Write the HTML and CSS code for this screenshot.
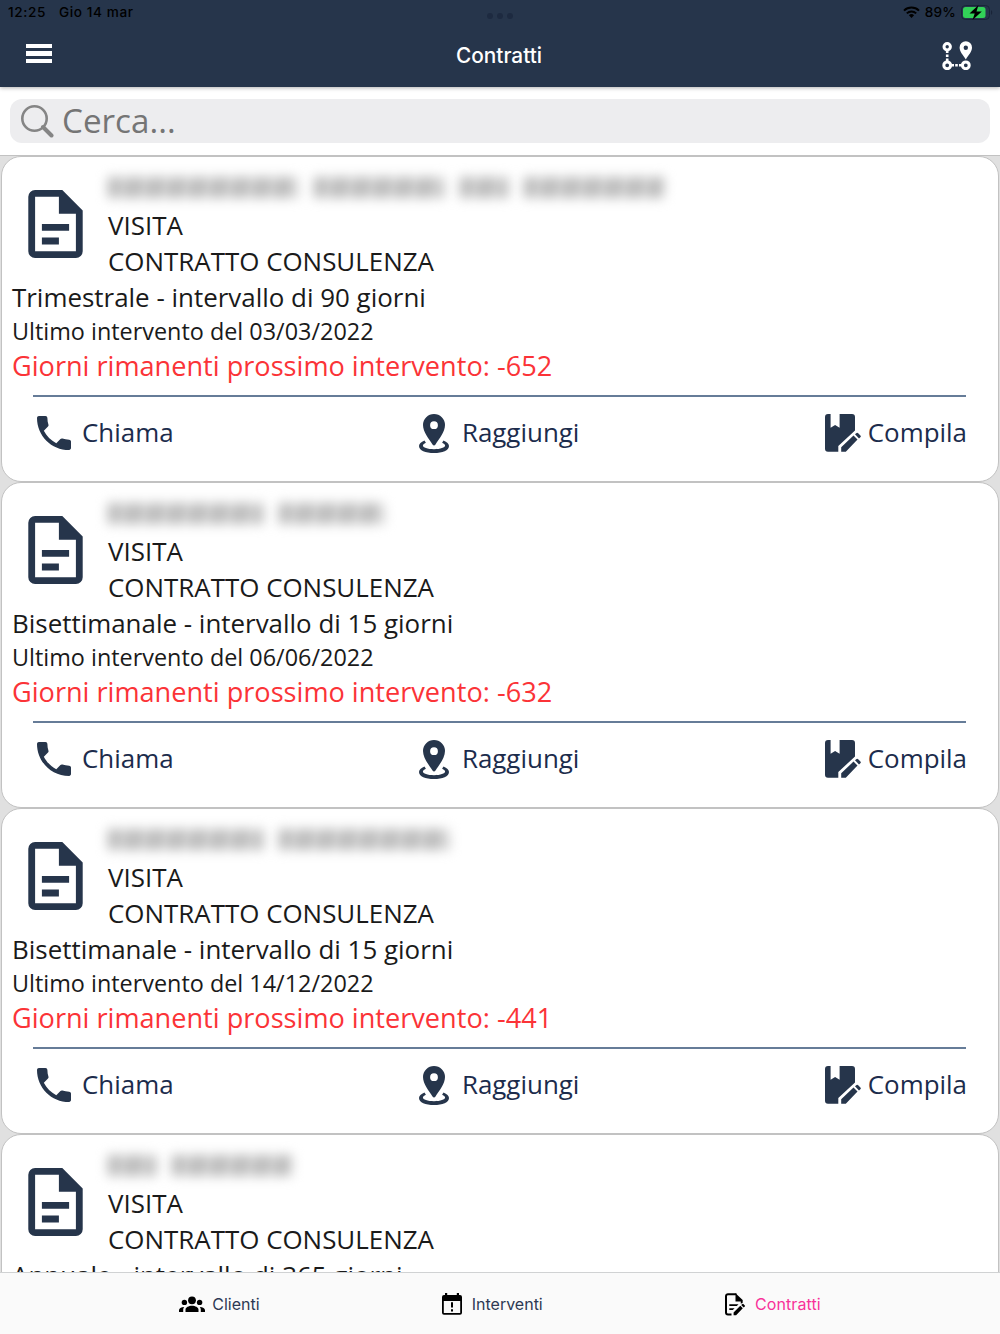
FILE: index.html
```
<!DOCTYPE html>
<html lang="it">
<head>
  <meta charset="UTF-8">
  <title>Contratti</title>
  <meta name="viewport" content="width=device-width, initial-scale=1.0">
  <link rel="stylesheet" href="styles.css">
</head>
<body>

<!-- Icone condivise -->
<svg class="sprite" aria-hidden="true">
  <symbol id="i-doc" viewBox="4 2 16 20">
    <path fill-rule="evenodd" d="M6 2h8l6 6v12a2 2 0 0 1-2 2H6a2 2 0 0 1-2-2V4a2 2 0 0 1 2-2zM6 4v16h12V9h-5V4zM8 12h8v2H8zM8 16h5v2H8z"/>
  </symbol>
  <symbol id="i-phone" viewBox="3 3 18 18">
    <path d="M6.62 10.79c1.44 2.83 3.76 5.14 6.59 6.59l2.2-2.200c.27-.27.67-.36 1.02-.24 1.12.37 2.33.57 3.57.57.55 0 1 .45 1 1V20c0 .55-.45 1-1 1-9.39 0-17-7.61-17-17 0-.55.45-1 1-1h3.500c.55 0 1 .45 1 1 0 1.250.2 2.450.57 3.570.11.35.03.74-.25 1.020l-2.200 2.200z"/>
  </symbol>
  <symbol id="i-pin" viewBox="0 0 30 39">
    <path fill-rule="evenodd" d="M15 0a11 11 0 0 1 11 11c0 7-6 14-9.500 19.500q-1.500 2-3 0C10 25 4 18 4 11A11 11 0 0 1 15 0zm0 7.300a3.900 3.900 0 1 0 0 7.800a3.900 3.900 0 1 0 0-7.800z"/>
    <path d="M5.500 26.500C2 28 0 29.800 0 32c0 4.400 6.500 7 15 7s15-2.600 15-7c0-2.200-2-4-5.500-5.500l-1.400 2.200c2 .9 3 1.900 3 2.800 0 2-4.600 3.700-11.100 3.700S3.900 33.500 3.900 31.500c0-.9 1-1.900 3-2.800z"/>
  </symbol>
  <symbol id="i-compile" viewBox="0 0 36 38">
    <path d="M3 0h2.600v13.800l4.500-2.800 4.500 2.800V0H27a3 3 0 0 1 3 3v13.500L13.300 32v5.800H3a3 3 0 0 1-3-3V3a3 3 0 0 1 3-3z"/>
    <path d="M16.200 33.200 28.500 21.600l4 3.900-11.700 12.300h-4.600zM30 20.200l1.600-1.200q.8-.6 1.600.2l2.200 2.200q.8.800.2 1.600L34 24.400z"/>
  </symbol>
</svg>

<header class="header">
  <div class="status">
    <div class="status-time"><span>12:25</span><span>Gio 14 mar</span></div>
    <div class="dots"><i></i><i></i><i></i></div>
    <div class="status-right">
      <svg class="wifi" viewBox="0 0 17 12">
        <g fill="none" stroke="#000" stroke-width="2">
          <path d="M1 4.600a10.800 10.800 0 0 1 15 0"/>
          <path d="M3.800 7.400a6.800 6.800 0 0 1 9.400 0"/>
        </g>
        <path d="M8.500 12 5.900 9.300a3.800 3.800 0 0 1 5.200 0z"/>
      </svg>
      <span>89%</span>
      <svg class="battery" viewBox="0 0 32 15">
        <rect x=".5" y=".5" width="28" height="14" rx="4" fill="none" stroke="#192438"/>
        <rect x="2" y="2" width="22.500" height="11" rx="2.500" fill="#32d158"/>
        <path d="M30 5.200c1.600.5 1.600 4 0 4.600z" fill="#192438"/>
        <path d="M17.500 0 8.500 8.400h5.200L11.500 15l9.300-8.500h-5.300z"/>
      </svg>
    </div>
  </div>
  <div class="toolbar">
    <button class="menu" aria-label="Menu"><i></i><i></i><i></i></button>
    <h1>Contratti</h1>
    <svg class="route" viewBox="0 0 30 29">
      <g fill="none" stroke="#fff" stroke-width="3">
        <circle cx="5.200" cy="5.800" r="3.200"/>
        <circle cx="5.200" cy="24.300" r="3.400"/>
        <circle cx="23.800" cy="24.300" r="3.400"/>
      </g>
      <path fill="#fff" d="M3.900 9h2.600v3H3.900zM3.900 13.500h2.600v2.600H3.900zM3.900 17.600h2.600v3H3.900zM9 23h3v2.600H9zM13.200 23h2.600v2.600h-2.600zM17 23h3v2.600h-3z"/>
      <path fill="#fff" fill-rule="evenodd" d="M23.800.3A6.200 6.200 0 0 1 30 6.500c0 4.200-3.500 7.500-6.200 12-2.700-4.500-6.200-7.800-6.200-12A6.200 6.200 0 0 1 23.800.3zm0 4.200a2.200 2.200 0 1 0 0 4.400a2.200 2.200 0 1 0 0-4.400z"/>
    </svg>
  </div>
</header>

<div class="search">
  <div class="search-box">
    <svg viewBox="0 0 33 33"><circle cx="13.500" cy="13.500" r="12.200"/><path d="M22 22l8.500 8.500"/></svg>
    <span>Cerca...</span>
  </div>
</div>

<main class="list">
  <article class="card">
    <div class="card-top">
      <svg class="doc"><use href="#i-doc"/></svg>
      <div class="card-head">
        <div class="hidden-name"><i class="w190"></i><i class="w130"></i><i class="w48"></i><i class="w140"></i></div>
        <div>VISITA</div>
        <div>CONTRATTO CONSULENZA</div>
      </div>
    </div>
    <div class="frequency">Trimestrale - intervallo di 90 giorni</div>
    <div class="last">Ultimo intervento del 03/03/2022</div>
    <div class="remaining">Giorni rimanenti prossimo intervento: -652</div>
    <div class="actions">
      <a class="action"><svg class="phone"><use href="#i-phone"/></svg><span>Chiama</span></a>
      <a class="action"><svg class="pin"><use href="#i-pin"/></svg><span>Raggiungi</span></a>
      <a class="action"><svg class="compile"><use href="#i-compile"/></svg><span>Compila</span></a>
    </div>
  </article>

  <article class="card">
    <div class="card-top">
      <svg class="doc"><use href="#i-doc"/></svg>
      <div class="card-head">
        <div class="hidden-name"><i class="w155"></i><i class="w105"></i></div>
        <div>VISITA</div>
        <div>CONTRATTO CONSULENZA</div>
      </div>
    </div>
    <div class="frequency">Bisettimanale - intervallo di 15 giorni</div>
    <div class="last">Ultimo intervento del 06/06/2022</div>
    <div class="remaining">Giorni rimanenti prossimo intervento: -632</div>
    <div class="actions">
      <a class="action"><svg class="phone"><use href="#i-phone"/></svg><span>Chiama</span></a>
      <a class="action"><svg class="pin"><use href="#i-pin"/></svg><span>Raggiungi</span></a>
      <a class="action"><svg class="compile"><use href="#i-compile"/></svg><span>Compila</span></a>
    </div>
  </article>

  <article class="card">
    <div class="card-top">
      <svg class="doc"><use href="#i-doc"/></svg>
      <div class="card-head">
        <div class="hidden-name"><i class="w155"></i><i class="w170"></i></div>
        <div>VISITA</div>
        <div>CONTRATTO CONSULENZA</div>
      </div>
    </div>
    <div class="frequency">Bisettimanale - intervallo di 15 giorni</div>
    <div class="last">Ultimo intervento del 14/12/2022</div>
    <div class="remaining">Giorni rimanenti prossimo intervento: -441</div>
    <div class="actions">
      <a class="action"><svg class="phone"><use href="#i-phone"/></svg><span>Chiama</span></a>
      <a class="action"><svg class="pin"><use href="#i-pin"/></svg><span>Raggiungi</span></a>
      <a class="action"><svg class="compile"><use href="#i-compile"/></svg><span>Compila</span></a>
    </div>
  </article>

  <article class="card">
    <div class="card-top">
      <svg class="doc"><use href="#i-doc"/></svg>
      <div class="card-head">
        <div class="hidden-name"><i class="w48"></i><i class="w120"></i></div>
        <div>VISITA</div>
        <div>CONTRATTO CONSULENZA</div>
      </div>
    </div>
    <div class="frequency">Annuale - intervallo di 365 giorni</div>
  </article>
</main>

<nav class="tabs">
  <a class="tab">
    <svg class="people" viewBox="0 0 26 17">
      <circle cx="13" cy="4.300" r="3.900"/><circle cx="5.400" cy="6.400" r="2.700"/><circle cx="20.600" cy="6.400" r="2.700"/>
      <path d="M6.500 16v-2.300c0-2.300 3.300-3.900 6.500-3.900s6.500 1.600 6.500 3.900V16zM0 16v-1.700c0-1.700 2-3.100 5.200-3.200-.7.900-1 1.700-1 2.700V16zM26 16v-1.700c0-1.700-2-3.100-5.200-3.200.7.900 1 1.700 1 2.700V16z"/>
    </svg>
    <span>Clienti</span>
  </a>
  <a class="tab">
    <svg class="calendar" viewBox="0 0 20 22">
      <path fill-rule="evenodd" d="M3 0h2.200v2h9.600V0H17v2h1a2 2 0 0 1 2 2v15.800a2 2 0 0 1-2 2H2a2 2 0 0 1-2-2V4a2 2 0 0 1 2-2h1zM1.800 8v12h16.400V8zM9 9.200h2v5.300H9zM9 16.300h2v2.200H9z"/>
    </svg>
    <span>Interventi</span>
  </a>
  <a class="tab active">
    <svg class="contract" viewBox="0 0 20 23">
      <path d="M11.500 1.200H3a2 2 0 0 0-2 2v16.300a2 2 0 0 0 2 2h3.500" fill="none" stroke="#000" stroke-width="2"/>
      <path d="M10.500.2 17.700 7v2.800l-1.900 1V8.500h-5.300zM4.300 11.200h9.200L11.800 13H4.300zM4.300 15.200h5.300L7.800 17H4.300zM8.600 19.500l6.700-6.700 2.500 2.500-6.700 6.900H8.600zM16.200 11.900l1.200-1q.5-.4 1 0l1.400 1.500q.4.500 0 1l-1.100 1.100z"/>
    </svg>
    <span>Contratti</span>
  </a>
</nav>

</body>
</html>
```
FILE: styles.css
```
* {
  box-sizing: border-box;
}

body {
  margin: 0;
  height: 1334px;
  display: flex;
  flex-direction: column;
  overflow: hidden;
  background: #e0e0e0;
  color: #1a1a1a;
  font-family: "Open Sans", "Noto Sans", sans-serif;
}

.sprite {
  display: none;
}

svg {
  display: block;
  flex: none;
}

/* Intestazione */
.header {
  flex: none;
  height: 87px;
  background: #26354b;
  font-family: Inter, sans-serif;
  box-shadow: 0 1px 4px rgba(0, 0, 0, 0.3);
  z-index: 1;
}

.status {
  display: grid;
  grid-template-columns: 1fr auto 1fr;
  align-items: center;
  height: 24px;
  padding: 0 8px;
  color: #000;
  font-size: 13.6px;
  font-weight: 500;
  letter-spacing: 0.6px;
}

.status-time {
  display: flex;
  gap: 13px;
}

.dots {
  display: flex;
  gap: 4px;
  padding-top: 7px;
}

.dots i {
  width: 6px;
  height: 6px;
  border-radius: 50%;
  background: #1d2a40;
}

.status-right {
  display: flex;
  justify-content: flex-end;
  align-items: center;
  gap: 5px;
  margin-right: -1px;
  letter-spacing: 0.2px;
}

.wifi {
  width: 17px;
  height: 12px;
}

.battery {
  width: 32px;
  height: 15px;
}

.toolbar {
  display: grid;
  grid-template-columns: 1fr auto 1fr;
  align-items: center;
  height: 63px;
  padding: 0 28px 0 26px;
}

.toolbar h1 {
  margin: 0;
  color: #fff;
  font-size: 20.8px;
  font-weight: 550;
}

.menu {
  display: flex;
  flex-direction: column;
  gap: 3px;
  width: 26px;
  padding: 0;
  margin-bottom: 4px;
  border: none;
  background: none;
}

.menu i {
  width: 26px;
  height: 4.3px;
  background: #fff;
}

.route {
  width: 30px;
  height: 29px;
  justify-self: end;
}

/* Ricerca */
.search {
  flex: none;
  height: 69px;
  padding: 12px 10px;
  background: #fff;
  border-bottom: 1px solid #c2c2c2;
}

.search-box {
  display: flex;
  align-items: center;
  gap: 8px;
  height: 44px;
  padding-left: 11px;
  border-radius: 12px;
  background: #ededef;
  color: #757575;
  font-size: 33.2px;
  line-height: 46px;
}

.search-box svg {
  width: 33px;
  height: 33px;
  fill: none;
  stroke: #858585;
  stroke-width: 2.6;
}

.search-box path {
  stroke-width: 4;
  stroke-linecap: round;
}

/* Elenco contratti */
.list {
  flex: 1;
  min-height: 0;
  padding: 0 1px;
  overflow: hidden;
}

.card {
  height: 326px;
  padding: 14px 11px 0 10px;
  border: 1px solid #c2c2c2;
  border-radius: 20px;
  background: #fff;
  font-size: 25.93px;
  line-height: 36px;
}

.card-top {
  display: flex;
  gap: 25px;
  padding-left: 16px;
}

.doc {
  width: 55px;
  height: 68px;
  margin-top: 18.5px;
  fill: #26354b;
}

/* nome cliente oscurato */
.hidden-name {
  display: flex;
  align-items: center;
  gap: 16px;
  height: 36px;
  padding-bottom: 4px;
  filter: blur(6px);
}

.hidden-name i {
  height: 21px;
  background: repeating-linear-gradient(100deg, #b8b8b8 0 12px, #d2d2d2 12px 21px);
}

.w48 { width: 48px; }
.w105 { width: 105px; }
.w120 { width: 120px; }
.w130 { width: 130px; }
.w140 { width: 140px; }
.w155 { width: 155px; }
.w170 { width: 170px; }
.w190 { width: 190px; }

.last {
  font-size: 23.4px;
  line-height: 33px;
}

.remaining {
  color: #fb3337;
  font-size: 27.13px;
}

.actions {
  display: flex;
  justify-content: space-between;
  align-items: center;
  height: 74px;
  margin: 11px 21px 0;
  padding-left: 4px;
  border-top: 2px solid #667c98;
}

.action {
  display: flex;
  align-items: center;
  color: #1c2c4c;
  fill: #26354b;
}

.action span {
  margin-top: -2px;
}

.action:last-child {
  margin-right: -1px;
}

.phone {
  width: 34px;
  height: 34px;
  margin-right: 11px;
}

.pin {
  width: 30px;
  height: 39px;
  margin-right: 13px;
}

.compile {
  width: 36px;
  height: 38px;
  margin-right: 7px;
}

/* Barra inferiore */
.tabs {
  flex: none;
  display: flex;
  justify-content: space-evenly;
  align-items: center;
  height: 62px;
  padding-top: 1px;
  border-top: 1px solid #d0d2d3;
  background: #fafafa;
  font-family: Inter, sans-serif;
  font-size: 16px;
}

.tab {
  display: flex;
  align-items: center;
  color: #2d3954;
}

.tab:first-child {
  margin-left: -3px;
}

.tab.active {
  color: #f83299;
  letter-spacing: 0.1px;
  margin-right: -3px;
}

.people {
  width: 26px;
  height: 17px;
  margin-right: 7px;
}

.calendar {
  width: 20px;
  height: 22px;
  margin-right: 10px;
}

.contract {
  width: 20px;
  height: 23px;
  margin-right: 10px;
}
```
